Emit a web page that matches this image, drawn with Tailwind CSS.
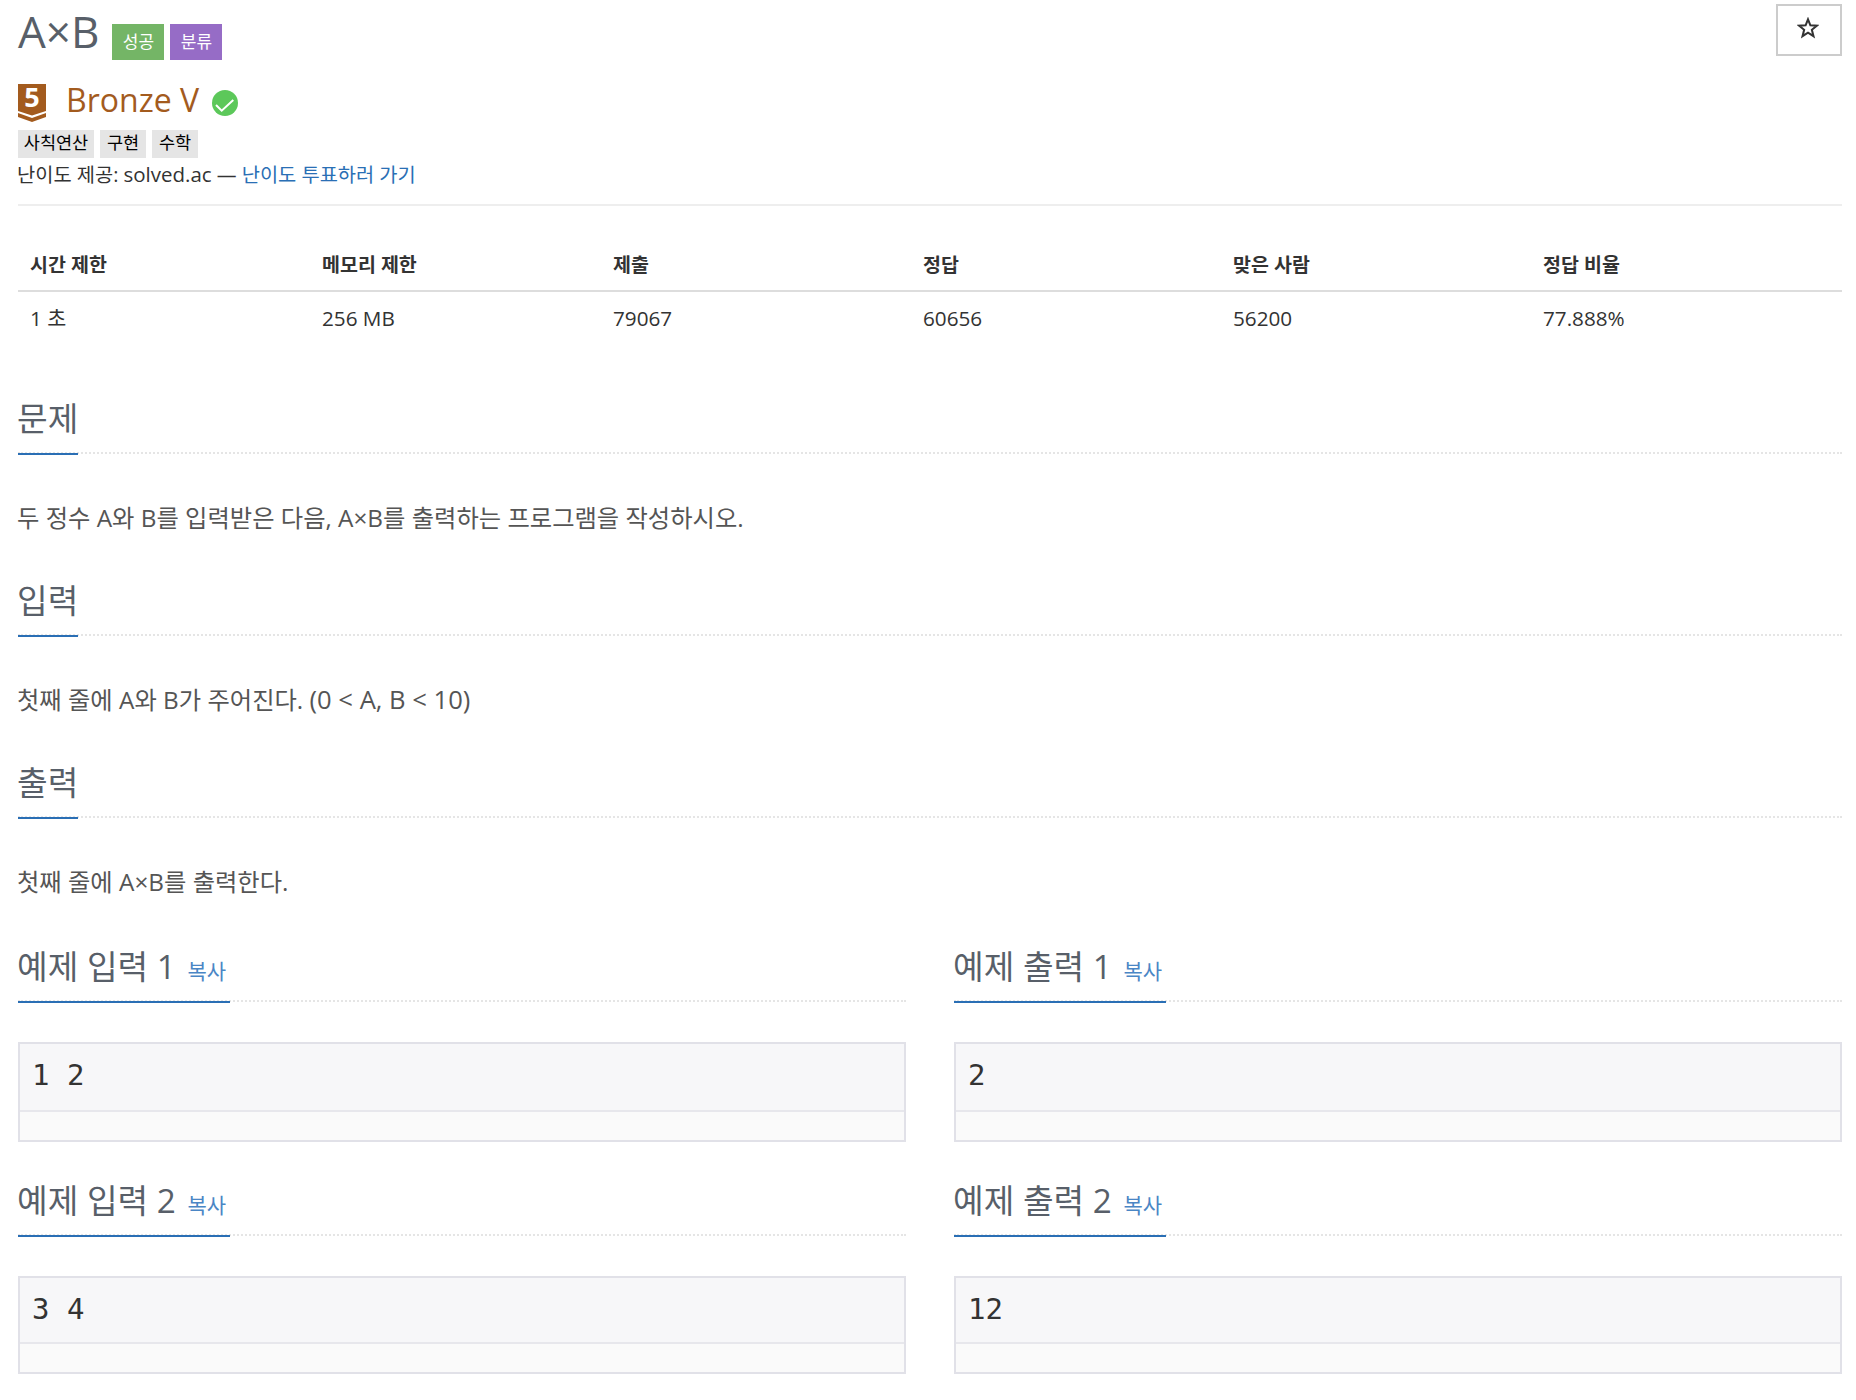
<!DOCTYPE html>
<html lang="ko">

<head>
  <meta charset="UTF-8" />
  <title>A×B</title>
  <script src="https://cdn.jsdelivr.net/npm/@tailwindcss/browser@4"></script>
</head>

<body class="bg-white text-[#333] font-['Open_Sans','Noto_Sans_CJK_KR',sans-serif] h-[1400px] overflow-hidden">
  <div class="pl-[18px] pr-[14px]">
    <!-- Title -->
    <div class="flex justify-between h-[66px]">
      <div class="flex items-start">
        <h1 class="text-[44px] leading-[62px] text-[#585f69]">A×B</h1>
        <span class="mt-[24px] ml-[13px] w-[52px] h-[36px] bg-[#74b566] text-white text-[17px] leading-[35px] text-center">성공</span>
        <span class="mt-[24px] ml-[6px] w-[52px] h-[36px] bg-[#966cc6] text-white text-[17px] leading-[35px] text-center">분류</span>
      </div>
      <button class="mt-[4px] w-[66px] h-[52px] border-2 border-[#ccc] flex items-center justify-center">
        <svg class="mb-[4px] mr-[2px]" width="22" height="22" viewBox="0 0 24 24" fill="none" stroke="#333" stroke-width="2.200">
          <path d="M12 2.500l2.600 6.600 7 .4-5.400 4.500 1.800 6.900-6-3.800-6 3.800 1.800-6.900-5.400-4.500 7-.4z" />
        </svg>
      </button>
    </div>

    <!-- Tier -->
    <div class="flex items-center h-[64px] pt-[4px]">
      <svg class="w-[28px] h-[39px] mt-[6px] overflow-visible" viewBox="0 0 28 39">
        <path d="M0 0h28v27l-14 4.500-14-4.500z" fill="#a35b1e" />
        <path d="M0 29l14 5 14-5v4l-14 5-14-5z" fill="#a35b1e" />
        <text x="14" y="23" text-anchor="middle" fill="#fff" font-size="27" font-weight="700" font-family="Open Sans">5</text>
      </svg>
      <span class="ml-[20px] text-[32px] text-[#a35b1e]">Bronze V</span>
      <svg class="ml-[13px] mt-[6px]" width="26" height="26" viewBox="0 0 26 26">
        <circle cx="13" cy="13" r="13" fill="#5cc85a" />
        <path d="M4 15l5.700 5.700L21.300 10" fill="none" stroke="#fff" stroke-width="2" />
      </svg>
    </div>
    <div class="flex gap-[6px]">
      <span class="h-[28px] w-[76px] text-center bg-[#e5e5e5] text-[17.500px] leading-[25px] text-black">사칙연산</span>
      <span class="h-[28px] w-[46px] text-center bg-[#e5e5e5] text-[17.500px] leading-[25px] text-black">구현</span>
      <span class="h-[28px] w-[46px] text-center bg-[#e5e5e5] text-[17.500px] leading-[25px] text-black">수학</span>
    </div>
    <p class="text-[19.800px] leading-[33px] indent-[-1px]">난이도 제공: <span class="text-[20.500px] leading-none">solved.ac</span> — <a class="text-[#2a6fb5]">난이도 투표하러 가기</a></p>
    <div class="mt-[13px] h-[2px] bg-[#eee]"></div>

    <!-- Info table -->
    <div class="mt-[32px] grid grid-cols-[292px_291px_310px_310px_310px_1fr] text-[20.700px]">
      <div class="col-span-6 grid grid-cols-subgrid h-[54px] items-center border-b-2 border-[#ddd] font-bold text-[19.500px] pt-[1px]">
        <span class="pl-[12px]">시간 제한</span><span class="pl-[12px]">메모리 제한</span><span class="pl-[12px]">제출</span><span class="pl-[12px]">정답</span><span class="pl-[12px]">맞은 사람</span><span class="pl-[12px]">정답 비율</span>
      </div>
      <div class="col-span-6 grid grid-cols-subgrid h-[54px] items-center">
        <span class="pl-[12px]">1 초</span><span class="pl-[12px]">256 MB</span><span class="pl-[12px]">79067</span><span class="pl-[12px]">60656</span><span class="pl-[12px]">56200</span><span class="pl-[12px]">77.888%</span>
      </div>
    </div>

    <!-- Sections -->
    <section class="mt-[50px]">
      <div class="border-b-2 border-dotted border-[#e5e5e5] h-[58px]">
        <h2 class="inline-block w-[60px] h-[59px] border-b-2 border-[#2a6fb5] text-[33.300px] leading-[44px] text-[#585f69] whitespace-nowrap indent-[-1px]">문제</h2>
      </div>
      <p class="mt-[48px] text-[24.300px] leading-[32px] text-[#555] indent-[-1px]">두 정수 A와 B를 입력받은 다음, A×B를 출력하는 프로그램을 작성하시오.</p>
    </section>
    <section class="mt-[44px]">
      <div class="border-b-2 border-dotted border-[#e5e5e5] h-[58px]">
        <h2 class="inline-block w-[60px] h-[59px] border-b-2 border-[#2a6fb5] text-[33.300px] leading-[44px] text-[#585f69] whitespace-nowrap indent-[-1px]">입력</h2>
      </div>
      <p class="mt-[48px] text-[24.300px] leading-[32px] text-[#555] indent-[-1px]">첫째 줄에 A와 B가 주어진다. <span class="text-[25.600px] leading-none">(0 &lt; A, B &lt; 10)</span></p>
    </section>
    <section class="mt-[44px]">
      <div class="border-b-2 border-dotted border-[#e5e5e5] h-[58px]">
        <h2 class="inline-block w-[60px] h-[59px] border-b-2 border-[#2a6fb5] text-[33.300px] leading-[44px] text-[#585f69] whitespace-nowrap indent-[-1px]">출력</h2>
      </div>
      <p class="mt-[48px] text-[24.300px] leading-[32px] text-[#555] indent-[-1px]">첫째 줄에 A×B를 출력한다.</p>
    </section>

    <!-- Samples -->
    <div class="mt-[46px] grid grid-cols-2 gap-x-[48px] gap-y-[36px]">
      <div>
        <div class="border-b-2 border-dotted border-[#e5e5e5] h-[58px]">
          <h2 class="inline-block w-[212px] h-[59px] border-b-2 border-[#2a6fb5] text-[33.300px] leading-[44px] text-[#585f69] whitespace-nowrap indent-[-1px]">예제 입력 1 <a class="ml-[3px] text-[21px] text-[#4a86c5]">복사</a></h2>
        </div>
        <div class="mt-[40px] h-[100px] border-2 border-[#e1e1e8] bg-[#f7f7f9]">
          <div class="h-[68px] border-b-2 border-[#e7e7ec] px-[12px] text-[29px] leading-[62px] font-['DejaVu_Sans_Mono',monospace]">1 2</div>
          <div class="h-[28px] bg-[#fafafa]"></div>
        </div>
      </div>
      <div>
        <div class="border-b-2 border-dotted border-[#e5e5e5] h-[58px]">
          <h2 class="inline-block w-[212px] h-[59px] border-b-2 border-[#2a6fb5] text-[33.300px] leading-[44px] text-[#585f69] whitespace-nowrap indent-[-1px]">예제 출력 1 <a class="ml-[3px] text-[21px] text-[#4a86c5]">복사</a></h2>
        </div>
        <div class="mt-[40px] h-[100px] border-2 border-[#e1e1e8] bg-[#f7f7f9]">
          <div class="h-[68px] border-b-2 border-[#e7e7ec] px-[12px] text-[29px] leading-[62px] font-['DejaVu_Sans_Mono',monospace]">2</div>
          <div class="h-[28px] bg-[#fafafa]"></div>
        </div>
      </div>
      <div>
        <div class="border-b-2 border-dotted border-[#e5e5e5] h-[58px]">
          <h2 class="inline-block w-[212px] h-[59px] border-b-2 border-[#2a6fb5] text-[33.300px] leading-[44px] text-[#585f69] whitespace-nowrap indent-[-1px]">예제 입력 2 <a class="ml-[3px] text-[21px] text-[#4a86c5]">복사</a></h2>
        </div>
        <div class="mt-[40px] h-[98px] border-2 border-[#e1e1e8] bg-[#f7f7f9]">
          <div class="h-[66px] border-b-2 border-[#e7e7ec] px-[12px] text-[29px] leading-[62px] font-['DejaVu_Sans_Mono',monospace]">3 4</div>
          <div class="h-[28px] bg-[#fafafa]"></div>
        </div>
      </div>
      <div>
        <div class="border-b-2 border-dotted border-[#e5e5e5] h-[58px]">
          <h2 class="inline-block w-[212px] h-[59px] border-b-2 border-[#2a6fb5] text-[33.300px] leading-[44px] text-[#585f69] whitespace-nowrap indent-[-1px]">예제 출력 2 <a class="ml-[3px] text-[21px] text-[#4a86c5]">복사</a></h2>
        </div>
        <div class="mt-[40px] h-[98px] border-2 border-[#e1e1e8] bg-[#f7f7f9]">
          <div class="h-[66px] border-b-2 border-[#e7e7ec] px-[12px] text-[29px] leading-[62px] font-['DejaVu_Sans_Mono',monospace]">12</div>
          <div class="h-[28px] bg-[#fafafa]"></div>
        </div>
      </div>
    </div>
  </div>
</body>

</html>
